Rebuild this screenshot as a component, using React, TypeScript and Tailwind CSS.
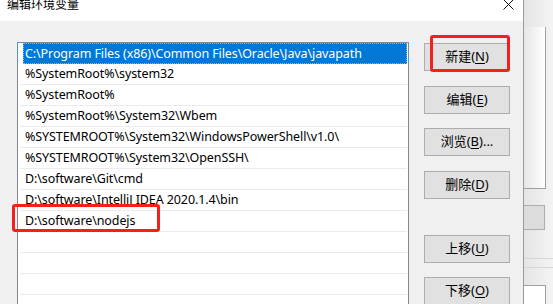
import React from "react";

const rows = [
  "C:\\Program Files (x86)\\Common Files\\Oracle\\Java\\javapath",
  "%SystemRoot%\\system32",
  "%SystemRoot%",
  "%SystemRoot%\\System32\\Wbem",
  "%SYSTEMROOT%\\System32\\WindowsPowerShell\\v1.0\\",
  "%SYSTEMROOT%\\System32\\OpenSSH\\",
  "D:\\software\\Git\\cmd",
  "D:\\software\\IntelliJ IDEA 2020.1.4\\bin",
  "D:\\software\\nodejs",
  "",
  "",
  "",
  "",
];

function Btn({ label, k, rest, className }: { label: string; k: string; rest?: string; className?: string }) {
  return (
    <div
      className={
        "w-[86px] h-[28px] shrink-0 bg-[#e1e1e1] border border-[#adadad] flex items-center justify-center text-[13px] text-black " +
        (className || "")
      }
    >
      <span>
        {label}(<span className="underline underline-offset-2">{k}</span>){rest}
      </span>
    </div>
  );
}

export default function App() {
  return (
    <div
      className="w-[553px] h-[304px] overflow-hidden relative flex bg-[#f0f0f0]"
      style={{ fontFamily: '"Noto Sans", "Noto Sans CJK SC", sans-serif' }}
    >
      {/* dialog */}
      <div className="w-[524px] h-full flex flex-col border-r border-[#9a9a9a] shrink-0">
        <div className="h-[21px] bg-white flex items-start justify-between shrink-0 overflow-hidden">
          <span
            className="ml-[7px] mt-[-4px] text-[12px] leading-[16px] text-black"
            style={{ fontFamily: '"Noto Sans CJK SC", sans-serif' }}
          >
            编辑环境变量
          </span>
          <svg width="11" height="11" viewBox="0 0 11 11" className="mr-[9px] mt-[-1px]">
            <path d="M0.5 0.5 L10.5 10.5 M10.5 0.5 L0.5 10.5" stroke="#111" strokeWidth="1" fill="none" />
          </svg>
        </div>
        <div className="flex-1 min-h-0 bg-[#f0f0f0] flex items-start pl-[17px] pt-[21px]">
          <div className="w-[392px] h-[300px] bg-white border border-[#828790] pl-[1px] pr-[1px] shrink-0">
            {rows.map((r, i) => (
              <div key={i} className="h-[21px] flex flex-col">
                {i === 0 ? (
                  <div className="h-[21px] ml-[4px] bg-[#0078d7] border border-dotted border-[#f0a040] text-white text-[12.5px] tracking-[-0.1px] leading-[19px] pl-[1px] whitespace-nowrap">
                    {r}
                  </div>
                ) : (
                  <>
                    <div className="h-[2px]" />
                    <div className="h-[19px] ml-[6px] text-black text-[12.5px] tracking-[-0.1px] leading-[15px] whitespace-nowrap">{r}</div>
                  </>
                )}
                {i > 0 && <div className="h-0 ml-[1px] border-t border-[#ebebeb]" />}
              </div>
            ))}
          </div>
          <div className="flex flex-col ml-[15px] pt-[1px]">
            <Btn label="新建" k="N" />
            <Btn label="编辑" k="E" className="mt-[15px]" />
            <Btn label="浏览" k="B" rest="..." className="mt-[14px]" />
            <Btn label="删除" k="D" className="mt-[15px]" />
            <Btn label="上移" k="U" className="mt-[36px]" />
            <Btn label="下移" k="O" className="mt-[14px]" />
          </div>
        </div>
      </div>
      {/* background window */}
      <div className="flex-1 flex flex-col bg-gradient-to-r from-[#e4e4e4] to-[#f4f4f4]">
        <div className="mt-[27px] h-[175px] w-[22px] bg-gradient-to-r from-[#e6e6e6] to-white border-r border-b border-[#a0a0a0]" />
        <div className="mt-[16px] h-[28px] w-[21px] bg-[#dcdcdc] border-r border-y border-[#adadad]" />
        <div className="mt-[28px] border-t border-[#d6d6d6]" />
        <div className="mt-[8px] border-t border-[#d6d6d6]" />
        <div className="mt-[17px] h-[20px] w-[22px] bg-white border-r border-t border-[#a0a0a0]" />
      </div>
      {/* annotations */}
      <div className="absolute left-[430px] top-[35px] w-[80px] h-[37px] border-[3px] border-[#f3201c] rounded-[3px]" />
      <div className="absolute left-[12px] top-[204px] w-[148px] h-[28px] border-[3px] border-[#f3201c] rounded-[3px]" />
    </div>
  );
}
